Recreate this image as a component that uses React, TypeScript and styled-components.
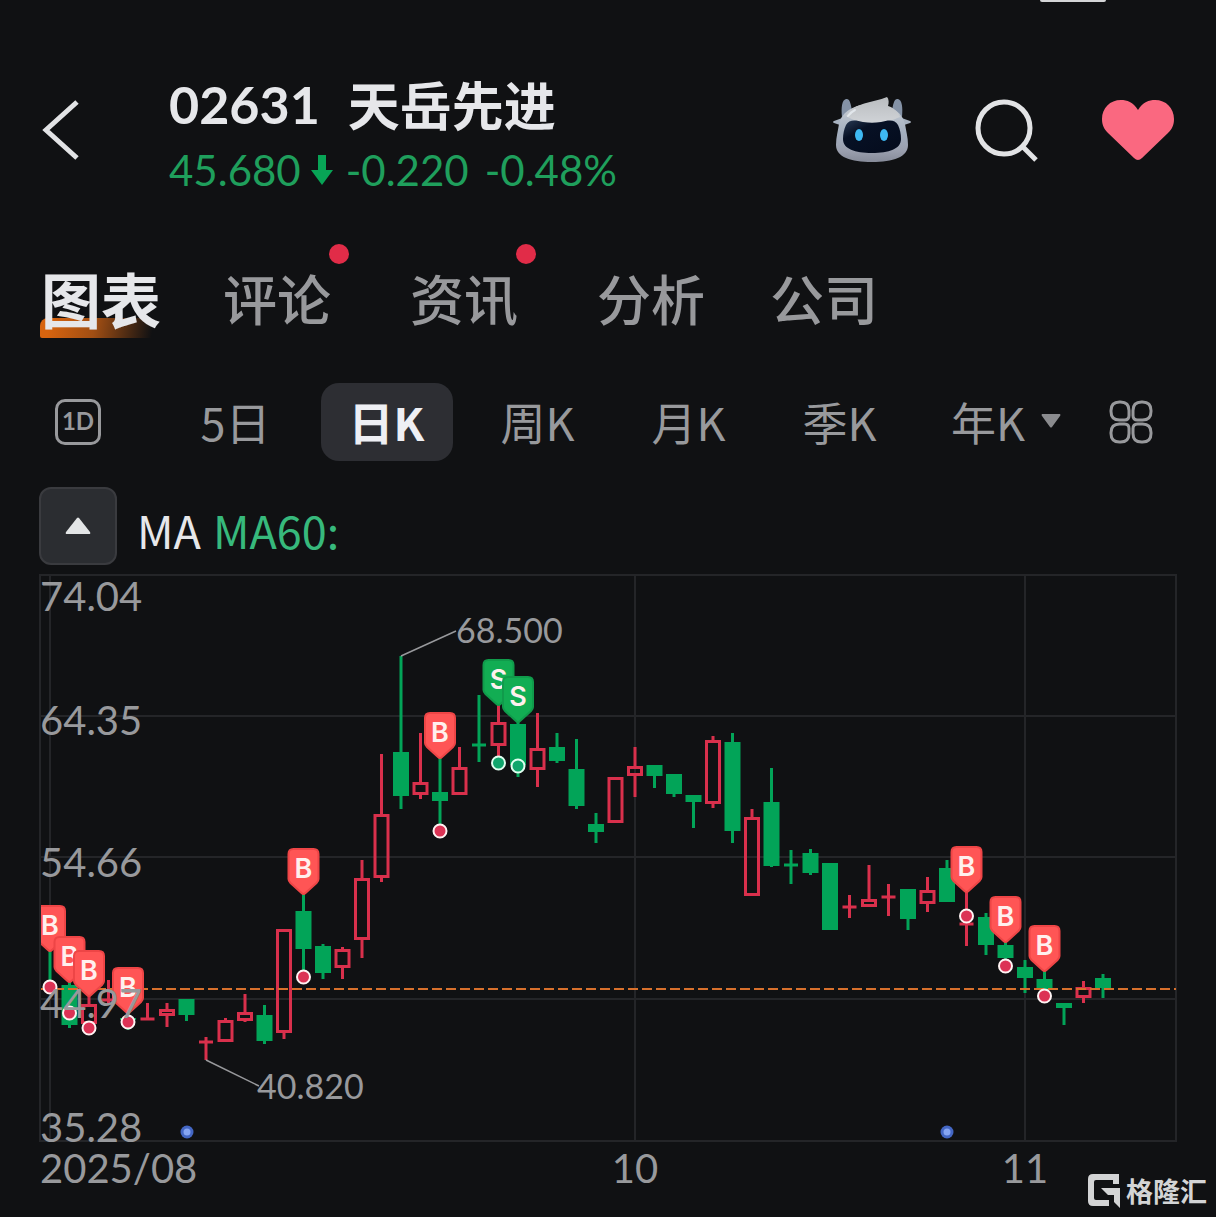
import React, { useState } from "react";
import styled, { createGlobalStyle, css } from "styled-components";

const latin = `Lato, "Noto Sans CJK SC", sans-serif`;
const cjk = `"Noto Sans CJK SC", sans-serif`;

const color = {
  bg: "#101113",
  text: "#e6e7ea",
  muted: "#98999c",
  up: "#d9304c",
  down: "#02a458",
  grid: "#242528",
};

const GlobalStyle = createGlobalStyle`
  *, *::before, *::after { box-sizing: border-box; }
  body { margin: 0; background: ${color.bg}; }
  button { margin: 0; padding: 0; border: 0; background: none; color: inherit; font: inherit; cursor: pointer; }
  h1, p { margin: 0; }
`;

const Page = styled.main`
  position: relative;
  padding: 64px 39px 0;
  background: ${color.bg};
  color: ${color.text};
  font-family: ${latin};
  overflow: hidden;
`;

const StatusPill = styled.div`
  position: absolute;
  top: 0;
  right: 110px;
  width: 66px;
  height: 2px;
  border-radius: 0 0 33px 33px;
  background: #d4d5d7;
`;

const Header = styled.header`
  display: flex;
  align-items: center;
  padding-right: 2px;
`;

const IconButton = styled.button`
  display: flex;
  flex: none;
  svg { display: block; }
`;

const Quote = styled.div`
  flex: 1;
  padding-left: 88px;
`;

const Name = styled.h1`
  display: flex;
  gap: 28px;
  font-size: 52px;
  line-height: 80px;
  font-weight: 700;
  white-space: nowrap;
`;

const StockName = styled.span`
  font-family: ${cjk};
`;

const Price = styled.p`
  display: flex;
  align-items: center;
  gap: 10px;
  padding: 2px 0;
  font-size: 42px;
  line-height: 48px;
  color: #1f9f5c;
  white-space: nowrap;
`;

const Change = styled.span`
  display: flex;
  gap: 16px;
  padding-left: 3px;
`;

const Actions = styled.div`
  display: flex;
  align-items: center;
  gap: 63px;
`;

const Tabs = styled.nav`
  display: flex;
  align-items: center;
  gap: 65px;
  height: 98px;
  margin-top: 56px;
  padding: 0 0 6px 2px;
  font-family: ${cjk};
`;

const Tab = styled.button<{ $active: boolean; $badge: boolean }>`
  position: relative;
  font-size: 54px;
  font-weight: 500;
  line-height: 76px;
  color: ${color.muted};
  white-space: nowrap;
  ${(p) => p.$badge && css`
    margin-right: 14px;
    &::after {
      content: "";
      position: absolute;
      top: -16px;
      right: -18px;
      width: 20px;
      height: 20px;
      border-radius: 50%;
      background: #e12c48;
    }
  `}
  ${(p) => p.$active && css`
    z-index: 0;
    margin-right: -3px;
    font-size: 60px;
    font-weight: 700;
    color: ${color.text};
    &::before {
      content: "";
      position: absolute;
      z-index: -1;
      left: -1px;
      right: 0;
      bottom: -2px;
      height: 20px;
      border-radius: 8px 0 0 2px;
      background: linear-gradient(100deg, #d7640f 8%, #a14e13 45%, #101113 92%);
    }
  `}
`;

const Periods = styled.nav`
  display: grid;
  grid-template-columns: 121fr repeat(5, 151fr) 182fr 80fr;
  align-items: center;
  justify-items: center;
  height: 78px;
  margin-top: 33px;
  font-family: ${cjk};
`;

const Period = styled.button<{ $active: boolean }>`
  display: flex;
  align-items: center;
  justify-content: center;
  gap: 16px;
  min-width: 132px;
  height: 78px;
  padding-bottom: 2px;
  border-radius: 18px;
  font-size: 45px;
  white-space: nowrap;
  color: ${(p) => (p.$active ? "#eeeff4" : color.muted)};
  background: ${(p) => (p.$active ? "#2d2e33" : "transparent")};
  font-weight: ${(p) => (p.$active ? 700 : 400)};
`;

const EdgeButton = styled(IconButton)<{ $inset: number }>`
  justify-self: start;
  margin-left: ${(p) => p.$inset}px;
`;

const DayBox = styled.span`
  display: flex;
  align-items: center;
  justify-content: center;
  width: 46px;
  height: 46px;
  border: 3px solid ${color.muted};
  border-radius: 10px;
  color: ${color.muted};
  font: 700 24px/36px ${latin};
  padding-bottom: 2px;
`;

const Indicators = styled.div`
  display: flex;
  align-items: center;
  gap: 20px;
  margin-top: 26px;
`;

const Collapse = styled.button`
  display: flex;
  align-items: center;
  justify-content: center;
  width: 78px;
  height: 78px;
  border: 2px solid #3a3b3f;
  border-radius: 12px;
  background: #2b2d31;
`;

const Legend = styled.p`
  display: flex;
  gap: 12px;
  padding-top: 8px;
  font-family: ${cjk};
  font-size: 45px;
  line-height: 52px;
`;

const Ma60 = styled.span`
  color: #37b97c;
`;

const Chart = styled.svg`
  display: block;
  width: 100%;
  height: auto;
  font-family: ${latin};
  fill: ${color.muted};
`;

const AxisText = styled.text`
  font-size: 40px;
`;

const CalloutText = styled.text`
  font-size: 34px;
`;

const PinText = styled.text`
  font-family: Inter, "Liberation Sans", sans-serif;
  font-size: 27px;
  font-weight: 600;
  fill: #fff0ee;
  text-anchor: middle;
`;

const Watermark = styled.div`
  position: absolute;
  right: 9px;
  bottom: 6px;
  display: flex;
  align-items: center;
  gap: 6px;
  color: #d3d4d5;
  font: 700 27px/40px ${cjk};
`;

/* [kind, high, bodyTop, bodyBottom, low]; u = hollow rise, d = solid fall */
type Candle = ["u" | "d", number, number, number, number];
const candles: Candle[] = [
  ["d", 948, 987, 988, 988], ["d", 982, 985, 1025, 1028], ["u", 992, 1004, 1024, 1024],
  ["u", 980, 1000, 1000, 1004], ["d", 1005, 1018, 1020, 1030], ["u", 1003, 1019, 1019, 1020],
  ["u", 1003, 1009, 1016, 1027], ["d", 999, 999, 1015, 1021], ["u", 1037, 1042, 1042, 1060],
  ["u", 1018, 1020, 1042, 1042], ["u", 994, 1012, 1021, 1022], ["d", 1005, 1015, 1041, 1044],
  ["u", 929, 929, 1033, 1039], ["d", 892, 911, 949, 972], ["d", 944, 946, 973, 979],
  ["u", 947, 949, 968, 979], ["u", 860, 878, 940, 958], ["u", 754, 814, 878, 882],
  ["d", 656, 752, 796, 809], ["u", 733, 782, 795, 799], ["d", 756, 792, 801, 826],
  ["u", 747, 767, 795, 795], ["d", 695, 745, 745, 762], ["u", 704, 722, 746, 757],
  ["d", 722, 724, 765, 777], ["u", 713, 748, 770, 787], ["d", 733, 747, 761, 763],
  ["d", 739, 769, 806, 809], ["d", 813, 824, 832, 843], ["u", 777, 777, 823, 823],
  ["u", 747, 766, 776, 797], ["d", 765, 765, 776, 788], ["d", 774, 774, 794, 797],
  ["d", 795, 795, 802, 828], ["u", 736, 740, 804, 808], ["d", 733, 742, 831, 843],
  ["u", 809, 817, 896, 896], ["d", 768, 802, 866, 867], ["d", 850, 865, 865, 884],
  ["d", 849, 853, 873, 875], ["d", 863, 863, 930, 930], ["u", 895, 907, 907, 918],
  ["u", 865, 899, 907, 907], ["u", 884, 897, 897, 916], ["d", 889, 889, 919, 930],
  ["u", 877, 890, 904, 912], ["d", 860, 868, 902, 902], ["u", 890, 924, 924, 946],
  ["d", 913, 917, 945, 955], ["d", 942, 945, 958, 960], ["d", 960, 967, 978, 993],
  ["d", 970, 979, 990, 996], ["d", 1003, 1003, 1008, 1025], ["u", 981, 987, 998, 1003],
  ["d", 974, 978, 988, 998],
];

const trades = [
  { i: 0, side: "B", pin: 905, dot: 987 },
  { i: 1, side: "B", pin: 936, dot: 1013 },
  { i: 2, side: "B", pin: 950, dot: 1028 },
  { i: 4, side: "B", pin: 967, dot: 1022 },
  { i: 13, side: "B", pin: 848, dot: 977 },
  { i: 20, side: "B", pin: 712, dot: 831 },
  { i: 23, side: "S", pin: 659, dot: 763 },
  { i: 24, side: "S", pin: 676, dot: 766 },
  { i: 47, side: "B", pin: 846, dot: 916 },
  { i: 49, side: "B", pin: 896, dot: 966 },
  { i: 51, side: "B", pin: 925, dot: 996 },
];

const priceLabels = [
  { text: "74.04", y: 611 }, { text: "64.35", y: 735 }, { text: "54.66", y: 877 },
  { text: "44.97", y: 1018 }, { text: "35.28", y: 1142 },
];

const xOf = (i: number) => 50 + i * 19.5;

function CandleMark({ i, data }: { i: number; data: Candle }) {
  const [kind, high, top, bottom, low] = data;
  const x = xOf(i);
  const stroke = kind === "u" ? color.up : color.down;
  const flat = bottom - top < 2;
  return (
    <g stroke={stroke} strokeWidth="3">
      {flat ? (
        <path fill="none" d={`M${x} ${high}V${low}M${x - 7} ${top}h14`} />
      ) : kind === "d" ? (
        <>
          <path d={`M${x} ${high}V${low}`} />
          <rect x={x - 8} y={top} width="16" height={bottom - top} fill={stroke} stroke="none" />
        </>
      ) : (
        <>
          <path d={`M${x} ${high}V${top}M${x} ${bottom}V${low}`} />
          <rect x={x - 6.5} y={top + 1.5} width="13" height={Math.max(bottom - top - 3, 2)} fill="none" />
        </>
      )}
    </g>
  );
}

function TradePin({ i, side, pin }: { i: number; side: string; pin: number }) {
  const x = xOf(i);
  const buy = side === "B";
  return (
    <g>
      <path
        d={`M${x - 10} ${pin + 1}h20q5 0 5 5v25q0 2-2 4l-11 10q-2 2-4 0l-11-10q-2-2-2-4v-25q0-5 5-5z`}
        fill={buy ? "#ff5555" : "#12ad53"}
        stroke={buy ? "#ee4546" : "#109b4b"}
        strokeWidth="2"
      />
      <PinText x={x} y={pin + 30}>{side}</PinText>
    </g>
  );
}

function KLineChart() {
  return (
    <Chart viewBox="39 565 1138 652" role="img" aria-label="日K">
      <defs>
        <clipPath id="plot"><rect x="41" y="575" width="1136" height="566" /></clipPath>
      </defs>
      <g stroke={color.grid} strokeWidth="2" fill="none">
        <path d="M40 575H1176V1141H40zM40 716H1176M40 857H1176M40 999H1176M50 575V1141M635 575V1141M1025 575V1141" />
      </g>
      <g clipPath="url(#plot)">
        {candles.map((c, i) => <CandleMark key={i} i={i} data={c} />)}
        <path d="M40 989H1176" stroke="#d8702c" strokeWidth="2" strokeDasharray="10 4" />
        {trades.map((t) => <TradePin key={t.i} {...t} />)}
      </g>
      {trades.map((t) => (
        <circle key={t.i} cx={xOf(t.i)} cy={t.dot} r="6.5" strokeWidth="2"
          fill={t.side === "B" ? "#dc3355" : "#0fa66c"} stroke={t.side === "B" ? "#fff3f3" : "#e0fff0"} />
      ))}
      {[187, 947].map((x) => (
        <g key={x}>
          <circle cx={x} cy="1132" r="6.5" fill="#4467c4" />
          <circle cx={x} cy="1132" r="3.5" fill="#86a5f3" />
        </g>
      ))}
      <path d="M401 656L456 631M206 1060L259 1086" stroke={color.muted} strokeWidth="1.5" />
      <CalloutText x="456" y="643">68.500</CalloutText>
      <CalloutText x="257" y="1099">40.820</CalloutText>
      {priceLabels.map((l) => <AxisText key={l.text} x="40" y={l.y}>{l.text}</AxisText>)}
      <AxisText x="40" y="1183">2025/08</AxisText>
      <AxisText x="635" y="1183" textAnchor="middle">10</AxisText>
      <AxisText x="1025" y="1183" textAnchor="middle">11</AxisText>
    </Chart>
  );
}

function RobotIcon() {
  return (
    <svg width="78" height="66" viewBox="0 0 78 66">
      <defs>
        <linearGradient id="shell" x1="0" y1="0" x2="0" y2="1">
          <stop offset="0" stopColor="#c9ced5" />
          <stop offset=".5" stopColor="#a3afbf" />
          <stop offset=".8" stopColor="#9ba0af" />
          <stop offset="1" stopColor="#868b99" />
        </linearGradient>
        <linearGradient id="visor" x1="0" y1="0" x2="1" y2="1">
          <stop offset="0" stopColor="#2a3b55" />
          <stop offset=".3" stopColor="#071125" />
          <stop offset="1" stopColor="#040b1c" />
        </linearGradient>
        <linearGradient id="hair" x1="0" y1="0" x2="0" y2="1">
          <stop offset="0" stopColor="#b9bcbf" />
          <stop offset="1" stopColor="#d0d3d7" />
        </linearGradient>
      </defs>
      <path d="M9 20C8 10 9 3 13 2s5 6 6 12zM69 20c1-10 0-17-4-18s-5 6-6 12z" fill="#8492a6" />
      <path d="M12 20L1 24q-2 1 0 2l9 3zM66 20l11 4q2 1 0 2l-9 3z" fill="#a7b2c0" />
      <path d="M6 27C9 14 22 7 39 7s30 7 33 20c1 7 3 13 3 21 0 12-15 17-36 17S3 60 3 48c0-8 2-14 3-21z" fill="url(#shell)" />
      <path d="M13 19C21 5 40 6 54 0c2 2 2 6 1 9 6 2 10 6 12 11-7 3-14 6-28 6-12 0-19-3-26-7z" fill="url(#hair)" />
      <path d="M13 28c3-6 10-5 17-3 6 1 12 1 18 0 7-2 14-3 17 3 2 4 3 9 3 14 0 10-12 14-29 14s-29-4-29-14c0-5 1-10 3-14z" fill="url(#visor)" />
      <ellipse cx="26" cy="38" rx="4" ry="6" fill="#3eb9f3" />
      <ellipse cx="51" cy="38" rx="4" ry="6" fill="#3eb9f3" />
      <path d="M15 19q3-4 7-6" stroke="#eef3fa" strokeWidth="2" fill="none" strokeLinecap="round" opacity=".7" />
    </svg>
  );
}

const tabs = [
  { name: "图表", badge: false }, { name: "评论", badge: true }, { name: "资讯", badge: true },
  { name: "分析", badge: false }, { name: "公司", badge: false },
];
const periods = ["5日", "日K", "周K", "月K", "季K", "年K"];

export default function App() {
  const [tab, setTab] = useState("图表");
  const [period, setPeriod] = useState("日K");
  return (
    <>
      <GlobalStyle />
      <Page>
        <StatusPill />
        <Header>
          <IconButton aria-label="返回">
            <svg width="42" height="62" viewBox="0 0 42 62" fill="none" stroke="#e2e3e5" strokeWidth="5">
              <path d="M38 3L7 31l31 28" />
            </svg>
          </IconButton>
          <Quote>
            <Name><span>02631</span><StockName>天岳先进</StockName></Name>
            <Price>
              <span>45.680</span>
              <svg width="22" height="32" viewBox="0 0 22 32" fill="#08a456"><path d="M7 1h8v15h7L11 31 0 16h7z" /></svg>
              <Change><span>-0.220</span><span>-0.48%</span></Change>
            </Price>
          </Quote>
          <Actions>
            <IconButton aria-label="助手"><RobotIcon /></IconButton>
            <IconButton aria-label="搜索">
              <svg width="64" height="64" viewBox="0 0 64 64" fill="none" stroke="#e2e3e5" strokeWidth="5">
                <circle cx="30" cy="30" r="26" />
                <path d="M48 48l14 14" />
              </svg>
            </IconButton>
            <IconButton aria-label="收藏">
              <svg width="74" height="62" viewBox="0 0 74 62" fill="#fa6880">
                <path d="M37 11C42 3 48 1 54 1c11 0 19 8 19 19 0 6-2 10-6 14L41 59q-4 4-8 0L7 34C3 30 1 26 1 20 1 9 9 1 20 1c6 0 12 2 17 10z" />
              </svg>
            </IconButton>
          </Actions>
        </Header>

        <Tabs>
          {tabs.map((t) => (
            <Tab key={t.name} $active={t.name === tab} $badge={t.badge} onClick={() => setTab(t.name)}>{t.name}</Tab>
          ))}
        </Tabs>

        <Periods>
          <EdgeButton $inset={16}><DayBox>1D</DayBox></EdgeButton>
          {periods.map((p) => (
            <Period key={p} $active={p === period} onClick={() => setPeriod(p)}>
              {p}
              {p === "年K" && (
                <svg width="20" height="14" viewBox="0 0 20 14" fill="#8a8b8e"><path d="M1 0h18q1 1 0 2l-8 11q-1 1-2 0L1 2q-1-1 0-2z" /></svg>
              )}
            </Period>
          ))}
          <EdgeButton $inset={12} aria-label="更多">
            <svg width="44" height="44" viewBox="0 0 44 44" fill="none" stroke={color.muted} strokeWidth="3">
              <path d="M10.500 2h1q8.500 0 8.500 8.500v5q0 4.500-4.500 4.500h-5Q2 20 2 11.500v-1Q2 2 10.500 2zM32.500 2h1Q42 2 42 10.500v1q0 8.500-8.500 8.500h-5q-4.500 0-4.500-4.500v-5Q24 2 32.500 2zM10.500 24h5q4.500 0 4.500 4.500v5q0 8.500-8.500 8.500h-1Q2 42 2 33.500v-1Q2 24 10.500 24zM28.500 24h5q8.500 0 8.500 8.500v1q0 8.500-8.500 8.500h-1Q24 42 24 33.500v-5q0-4.500 4.500-4.500z" />
            </svg>
          </EdgeButton>
        </Periods>

        <Indicators>
          <Collapse aria-label="收起">
            <svg width="26" height="18" viewBox="0 0 26 18" fill="#e3e5e6"><path d="M1 15L12 1q1-1 2 0l11 14q1 2-1 2H2q-2 0-1-2z" /></svg>
          </Collapse>
          <Legend><span>MA</span><Ma60>MA60:</Ma60></Legend>
        </Indicators>

        <KLineChart />

        <Watermark>
          <svg width="32" height="34" viewBox="0 0 32 34" fill="currentColor">
            <path d="M5 0H31V10H25V6H8Q6 6 6 8V24Q6 26 8 26H21V32H5Q0 32 0 27V5Q0 0 5 0zM13 14H32V34L26 28V21H20z" />
          </svg>
          <span>格隆汇</span>
        </Watermark>
      </Page>
    </>
  );
}
